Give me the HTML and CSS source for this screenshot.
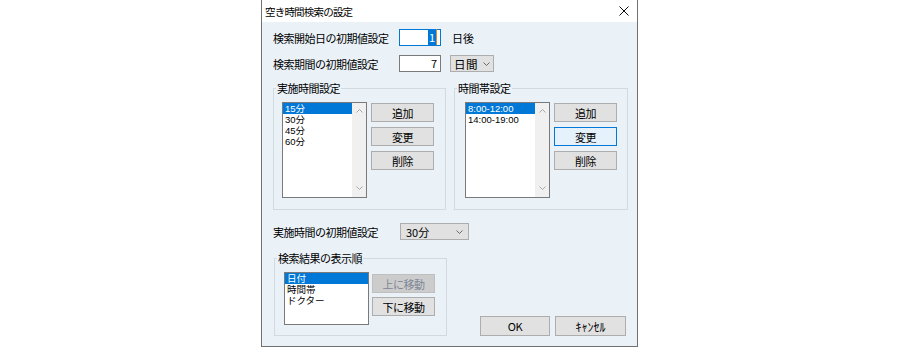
FILE: index.html
```html
<!DOCTYPE html>
<html lang="ja">
<head>
  <meta charset="UTF-8">
  <title>空き時間検索の設定</title>
  <link rel="stylesheet" href="styles.css">
</head>
<body>

<div class="dialog">
  <div class="titlebar">
    <span class="title">空き時間検索の設定</span>
    <svg class="close" width="10" height="10" viewBox="0 0 10 10"><path d="M0.5 0.5L9.5 9.5M9.5 0.5L0.5 9.5" stroke="#111" stroke-width="1" fill="none"/></svg>
  </div>

  <div class="content">
    <div class="row">
      <span class="label">検索開始日の初期値設定</span>
      <div class="input focused"><span class="selected-text">1</span></div>
      <span class="unit">日後</span>
    </div>
    <div class="row">
      <span class="label">検索期間の初期値設定</span>
      <div class="input">7</div>
      <div class="select select-days">
        <span>日間</span>
        <svg width="7" height="4" viewBox="0 0 7 4"><path d="M0.5 0.5L3.5 3.5L6.5 0.5" stroke="#6a6a6a" fill="none"/></svg>
      </div>
    </div>

    <div class="groups">
      <fieldset class="group group-left">
        <legend>実施時間設定</legend>
        <div class="group-body">
          <div class="listbox">
            <ul class="items">
              <li class="active">15分</li>
              <li>30分</li>
              <li>45分</li>
              <li>60分</li>
            </ul>
            <div class="scrollbar">
              <svg width="7" height="4" viewBox="0 0 7 4"><path d="M0.5 3.5L3.5 0.5L6.5 3.5" stroke="#a8a8a8" fill="none"/></svg>
              <svg width="7" height="4" viewBox="0 0 7 4"><path d="M0.5 0.5L3.5 3.5L6.5 0.5" stroke="#a8a8a8" fill="none"/></svg>
            </div>
          </div>
          <div class="buttons">
            <button class="btn">追加</button>
            <button class="btn">変更</button>
            <button class="btn">削除</button>
          </div>
        </div>
      </fieldset>

      <fieldset class="group group-right">
        <legend>時間帯設定</legend>
        <div class="group-body">
          <div class="listbox">
            <ul class="items">
              <li class="active">8:00-12:00</li>
              <li>14:00-19:00</li>
            </ul>
            <div class="scrollbar">
              <svg width="7" height="4" viewBox="0 0 7 4"><path d="M0.5 3.5L3.5 0.5L6.5 3.5" stroke="#a8a8a8" fill="none"/></svg>
              <svg width="7" height="4" viewBox="0 0 7 4"><path d="M0.5 0.5L3.5 3.5L6.5 0.5" stroke="#a8a8a8" fill="none"/></svg>
            </div>
          </div>
          <div class="buttons">
            <button class="btn">追加</button>
            <button class="btn btn-focus">変更</button>
            <button class="btn">削除</button>
          </div>
        </div>
      </fieldset>
    </div>

    <div class="row row-duration">
      <span class="label">実施時間の初期値設定</span>
      <div class="select select-duration">
        <span>30分</span>
        <svg width="7" height="4" viewBox="0 0 7 4"><path d="M0.5 0.5L3.5 3.5L6.5 0.5" stroke="#6a6a6a" fill="none"/></svg>
      </div>
    </div>

    <div class="bottom">
      <fieldset class="group group-order">
        <legend>検索結果の表示順</legend>
        <div class="group-body">
          <div class="listbox listbox-short">
            <ul class="items">
              <li class="active">日付</li>
              <li>時間帯</li>
              <li>ドクター</li>
            </ul>
          </div>
          <div class="buttons buttons-move">
            <button class="btn" disabled>上に移動</button>
            <button class="btn">下に移動</button>
          </div>
        </div>
      </fieldset>

      <div class="actions">
        <button class="btn btn-ok">OK</button>
        <button class="btn btn-cancel">ｷｬﾝｾﾙ</button>
      </div>
    </div>
  </div>
</div>

</body>
</html>
```

FILE: styles.css
```css
body {
  margin: 0;
  background: #fff;
  color: #000;
  font-family: "Noto Sans CJK JP", "Noto Sans", sans-serif;
  font-size: 11px;
}

.dialog {
  width: 377px;
  height: 347px;
  margin-left: 261px;
  box-sizing: border-box;
  border: 1px solid #707070;
  border-top: none;
  background: #eaf2f8;
  display: flex;
  flex-direction: column;
}

.titlebar {
  height: 22px;
  flex: none;
  background: #fff;
  display: flex;
  align-items: center;
  justify-content: space-between;
  padding: 0 8px 0 3px;
}

.title {
  font-size: 10.5px;
  letter-spacing: -0.8px;
}

.content {
  padding: 7px 9px 0 11px;
  display: flex;
  flex-direction: column;
}

.row {
  display: flex;
  align-items: center;
  height: 17px;
}

.row + .row {
  margin-top: 9px;
}

.label {
  width: 126px;
  letter-spacing: -0.5px;
}

.input {
  width: 42px;
  height: 17px;
  box-sizing: border-box;
  border: 1px solid #7a7a7a;
  background: #fff;
  text-align: right;
  padding-right: 3px;
  line-height: 15px;
}

.input.focused {
  border-color: #0078d7;
}

.selected-text {
  background: #0078d7;
  color: #fff;
  padding: 0 1px;
  border-right: 1px solid #e08a2c;
}

.unit {
  margin-left: 11px;
}

.select {
  height: 17px;
  box-sizing: border-box;
  border: 1px solid #adadad;
  background: #e1e1e1;
  display: flex;
  align-items: center;
  justify-content: space-between;
  padding: 0 5px 0 4px;
  white-space: nowrap;
}

.select-days {
  width: 44px;
  margin-left: 9px;
  padding: 0 3px 0 3px;
  font-size: 11.5px;
  letter-spacing: 0.5px;
}

.select-duration {
  width: 69px;
  padding-left: 5px;
}

.groups {
  display: flex;
  gap: 8px;
  margin-top: 10px;
}

.group {
  margin: 0;
  padding: 0;
  min-width: 0;
  box-sizing: border-box;
  border: 1px solid #d2dae1;
}

.group legend {
  margin-left: 2px;
  padding: 0 1px;
  line-height: 12px;
  letter-spacing: -0.5px;
}

.group-left {
  width: 173px;
}

.group-right {
  width: 174px;
}

.group-body {
  display: flex;
  align-items: flex-start;
  padding: 8px 0 11px 8px;
}

.group-right .group-body {
  padding-left: 10px;
}

.listbox {
  width: 85px;
  height: 96px;
  box-sizing: border-box;
  border: 1px solid #7a7a7a;
  background: #fff;
  display: flex;
}

.items {
  list-style: none;
  margin: 0;
  padding: 0;
  flex: 1;
  font-family: "Liberation Sans", "Noto Sans CJK JP", sans-serif;
}

.items li {
  font-size: 9.5px;
  line-height: 11px;
  height: 11px;
  padding-left: 2px;
  white-space: nowrap;
}

.items li.active {
  background: #0078d7;
  color: #fff;
}

.scrollbar {
  width: 14px;
  background: #f0f0f0;
  display: flex;
  flex-direction: column;
  align-items: center;
  justify-content: space-between;
  padding: 6px 0 7px;
}

.buttons {
  display: flex;
  flex-direction: column;
  gap: 5px;
  margin-left: 4px;
  padding-top: 1px;
}

.btn {
  width: 63px;
  height: 19px;
  margin: 0;
  padding: 0;
  box-sizing: border-box;
  border: 1px solid #adadad;
  background: #e1e1e1;
  font-family: inherit;
  font-size: 11px;
  color: #000;
  letter-spacing: -0.5px;
}

.btn-focus {
  border-color: #0078d7;
  background: #e5f1fb;
}

.btn:disabled {
  background: #cccccc;
  border-color: #bfbfbf;
  color: #7d8896;
}

.row-duration {
  margin-top: 13px;
}

.row-duration .label {
  width: 127px;
}

.bottom {
  display: flex;
  align-items: flex-end;
  margin-top: 12px;
}

.group-order {
  width: 173px;
  margin-left: 1px;
}

.group-order .group-body {
  padding: 8px 0 10px 9px;
}

.listbox-short {
  height: 53px;
}

.buttons-move {
  gap: 4px;
  margin-left: 3px;
  padding-top: 2px;
}

.actions {
  display: flex;
  gap: 5px;
  margin-left: auto;
  margin-right: 2px;
}

.btn-ok {
  width: 70px;
  height: 20px;
}

.btn-cancel {
  width: 71px;
  height: 20px;
  font-size: 12px;
  letter-spacing: 0;
}
```
